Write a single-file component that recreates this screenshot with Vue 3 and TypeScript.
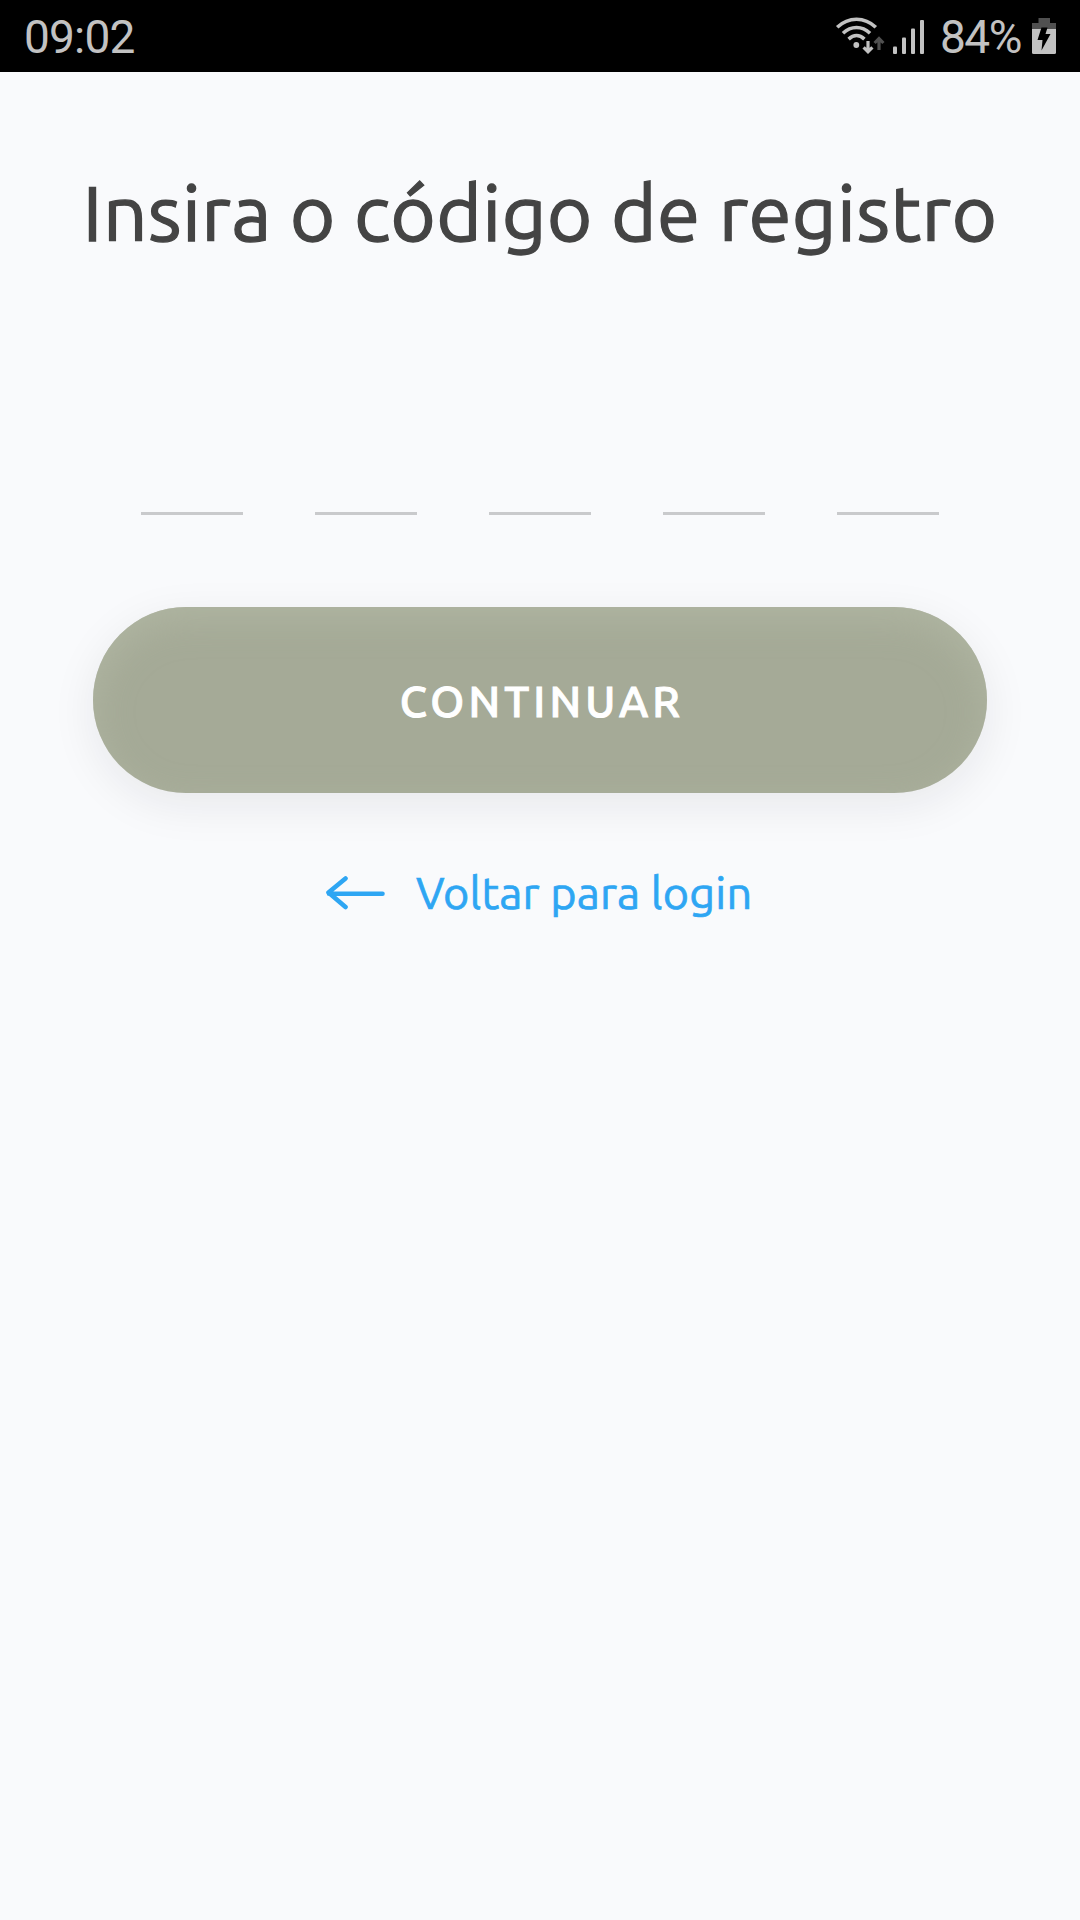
<script setup lang="ts">
import { ref } from 'vue'

const digits = ref<string[]>(['', '', '', '', ''])
</script>

<template>
  <div class="screen">
    <header class="status">
      <span class="clock">09:02</span>
      <div class="indicators">
        <svg class="wifi" width="50" height="38" viewBox="0 0 50 38" fill="none">
          <g stroke="#c2c2c2" stroke-width="3.6">
            <path d="M2.200 10.300C13.500-.400 29.500-.400 40.800 10.300" />
            <path d="M8 16.200C16 8.600 27 8.600 35 16.200" />
            <path d="M13.600 22.100C18.600 17.500 24.600 17.500 29.400 22.100" />
          </g>
          <circle cx="21.300" cy="28" r="2.900" fill="#c2c2c2" />
          <path d="M33 24V34M28.600 30.300L33 34.700L37.400 30.300" stroke="#c2c2c2" stroke-width="3.200" />
          <path d="M44 33V22M39.600 26L44 21.500L48.400 26" stroke="#505050" stroke-width="3.200" />
        </svg>
        <svg class="signal" width="32" height="36" viewBox="0 0 32 36" fill="#c2c2c2">
          <rect x="0" y="26.500" width="4" height="7.500" rx="1" />
          <rect x="9" y="17.500" width="4" height="16.500" rx="1" />
          <rect x="18" y="8.500" width="4" height="25.500" rx="1" />
          <rect x="27" y="0" width="4" height="34" rx="1" />
        </svg>
        <span class="percent">84%</span>
        <svg class="battery" width="24" height="36" viewBox="0 0 24 36">
          <path d="M6.500 0H18V5H24V11H0V5H6.500Z" fill="#505050" />
          <path d="M0 11H24V34.500Q24 36 22.500 36H1.500Q0 36 0 34.500Z" fill="#c2c2c2" />
          <path d="M9.500 9.500H15.500L13.500 16H18.500L9.500 32.500L10.500 22H5.500Z" fill="#000" />
        </svg>
      </div>
    </header>

    <main class="content">
      <h1 class="title">Insira o código de registro</h1>
      <div class="code">
        <span v-for="(digit, i) in digits" :key="i" class="slot">{{ digit }}</span>
      </div>
      <button class="continue" type="button">CONTINUAR</button>
      <a class="back">
        <svg class="arrow" width="60" height="34" viewBox="0 0 60 34" fill="none" stroke="#2ea6f3" stroke-width="4.600" stroke-linecap="round" stroke-linejoin="round">
          <path d="M56.500 17.700H3M19.500 2.500L2.500 16.500L19.500 31" />
        </svg>
        <span class="label">Voltar para login</span>
      </a>
    </main>
  </div>
</template>

<style>
body {
  margin: 0;
  background: #f9fafc;
}
</style>

<style scoped>
.screen {
  width: 1080px;
  height: 1920px;
  overflow: hidden;
  background: #f9fafc;
  font-family: Ubuntu, "Noto Sans", sans-serif;
}
.status {
  box-sizing: border-box;
  height: 72px;
  padding: 0 24px;
  display: flex;
  justify-content: space-between;
  background: #000;
  color: #c2c2c2;
  font: 46px/74px Roboto, sans-serif;
}
.clock {
  letter-spacing: -0.8px;
}
.indicators {
  display: flex;
  align-items: flex-start;
}
.wifi {
  margin-top: 17px;
}
.signal {
  margin: 20px 15px 0 8px;
}
.percent {
  width: 83px;
  margin-right: 9px;
  letter-spacing: -1.5px;
  white-space: nowrap;
}
.battery {
  margin-top: 18px;
}
.content {
  display: flex;
  flex-direction: column;
  align-items: center;
}
.title {
  margin: 88px 0 0;
  height: 104px;
  color: #444;
  font-size: 78px;
  line-height: 104px;
  font-weight: 400;
  letter-spacing: 0.35px;
  -webkit-text-stroke: 1.3px #444;
  white-space: nowrap;
}
.code {
  display: flex;
  gap: 72px;
  margin-top: 155px;
}
.slot {
  box-sizing: border-box;
  width: 102px;
  height: 96px;
  border-bottom: 3px solid #c9cacc;
}
.continue {
  width: 894px;
  height: 186px;
  margin-top: 92px;
  padding: 1px 0 0 4px;
  border: 0;
  border-radius: 93px;
  background: #a5aa97;
  color: #fff;
  font: 500 43.500px/185px Ubuntu, "Noto Sans", sans-serif;
  letter-spacing: 4.100px;
  -webkit-text-stroke: 1px #fff;
  box-shadow: 0 12px 45px rgba(30, 30, 40, 0.08), inset 0 12px 36px rgba(178, 184, 164, 0.8);
}
.back {
  display: flex;
  align-items: center;
  margin-top: 70px;
  height: 60px;
  width: 428px;
  color: #2ea6f3;
  font-size: 45px;
  font-weight: 400;
  letter-spacing: 0.15px;
  line-height: 60px;
  white-space: nowrap;
}
.arrow {
  flex: none;
}
.label {
  margin-left: 30px;
  -webkit-text-stroke: 0.7px #2ea6f3;
}
</style>
